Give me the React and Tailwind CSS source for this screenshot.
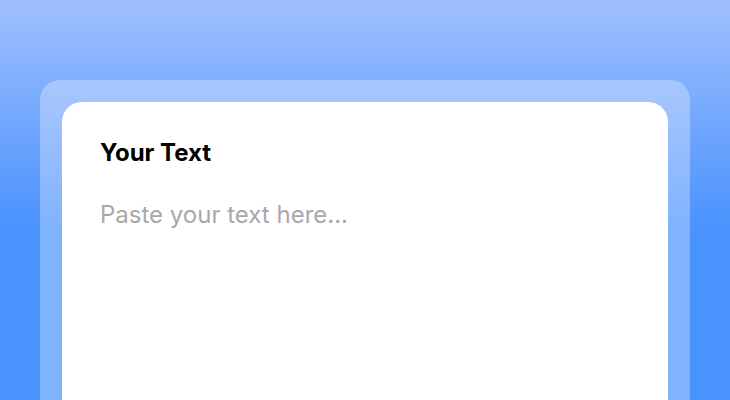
import React, { useState } from "react";

const App = () => {
  const [text, setText] = useState("");

  return (
    <main
      className="min-h-screen w-full overflow-hidden bg-[linear-gradient(180deg,#a0bffe_0px,#4a92fe_230px,#4a92fe_100%)] px-[40px] pt-[80px]"
      style={{ fontFamily: "Inter, 'Noto Sans', sans-serif" }}
    >
      {/* Outer frame */}
      <div className="h-[340px] rounded-t-[20px] bg-white/30 px-[22px] pt-[22px]">
        {/* Card */}
        <div className="flex h-full flex-col rounded-t-[20px] bg-white px-[38px] pt-[35px]">
          <h2 className="text-[24px] font-bold leading-[32px] text-black">Your Text</h2>
          <textarea
            value={text}
            onChange={(e) => setText(e.target.value)}
            placeholder="Paste your text here..."
            className="mt-[30px] flex-1 resize-none border-none bg-transparent p-0 text-[24px] leading-[32px] text-black outline-none placeholder:text-[#a8a8a8]"
          />
        </div>
      </div>
    </main>
  );
};

export default App;
